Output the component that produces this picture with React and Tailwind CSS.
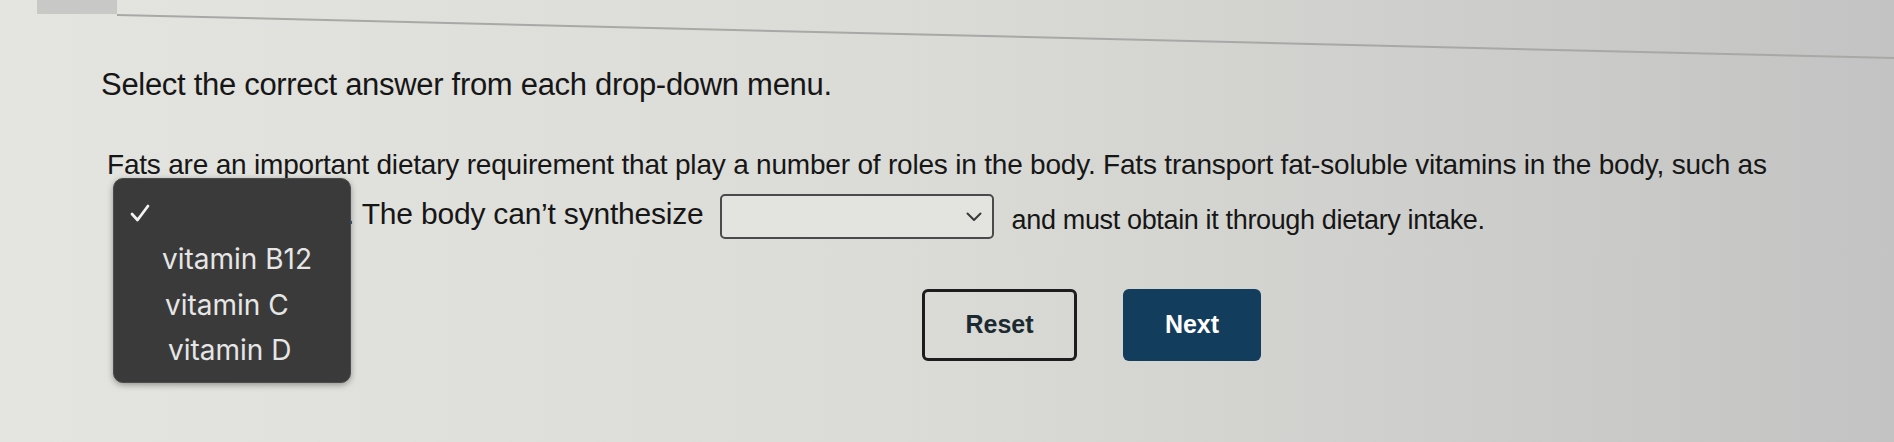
import React from "react";

function Check() {
  return (
    <svg width="20" height="18" viewBox="0 0 20 18" fill="none">
      <path d="M2 10 L7.5 16 L18 2" stroke="#f2f2f2" strokeWidth="2.8" strokeLinecap="round" strokeLinejoin="round" />
    </svg>
  );
}

function Chevron() {
  return (
    <svg width="16" height="10" viewBox="0 0 16 10" fill="none">
      <path d="M1.5 1.5 L8 8 L14.5 1.5" stroke="#3a3a3a" strokeWidth="2" strokeLinecap="round" strokeLinejoin="round" />
    </svg>
  );
}

export default function App() {
  const font = { fontFamily: '"Liberation Sans", Arial, sans-serif' };
  return (
    <div
      className="relative w-[1894px] h-[442px] overflow-hidden bg-gradient-to-r from-[#e4e4e0] via-[#dadad6] to-[#c3c3c3] text-[#161616]"
      style={font}
    >
      {/* top strip */}
      <div className="flex h-[14px]">
        <div className="ml-[37px] w-[80px] h-[14px] bg-[#c8c8c6]" />
      </div>
      <div className="ml-[117px] w-[1800px] h-[2px] bg-[#a8a8a6] origin-left rotate-[1.39deg]" />

      {/* instruction */}
      <div className="pl-[101px] mt-[51px] text-[31px] leading-[36px] tracking-[-0.3px]">
        Select the correct answer from each drop-down menu.
      </div>

      {/* paragraph */}
      <div className="pl-[107px] mt-[45px] text-[28px] leading-[34px] tracking-[-0.2px]">
        <div className="whitespace-nowrap">
          Fats are an important dietary requirement that play a number of roles in the body. Fats transport fat-soluble vitamins in the body, such as
        </div>
        <div className="flex items-center mt-[12px] whitespace-nowrap">
          <div className="ml-[6px] w-[232px] h-[44px] border-2 border-[#555] rounded-[5px] bg-[#e6e6e3]" />
          <span className="ml-[1px] -mt-[6px] text-[30px] tracking-[-0.2px]">. The body can’t synthesize</span>
          <div className="ml-[16px] w-[274px] h-[45px] border-2 border-[#4a4a4a] rounded-[5px] bg-[#e3e3df] flex items-center justify-end pr-[10px]">
            <Chevron />
          </div>
          <span className="ml-[18px] mt-[6px] text-[27px] tracking-[-0.35px]">and must obtain it through dietary intake.</span>
        </div>
      </div>

      {/* buttons */}
      <div className="flex mt-[50px] pl-[922px] gap-[46px]">
        <button
          className="w-[155px] h-[72px] rounded-[6px] border-[3px] border-[#1d1d1d] bg-transparent text-[25px] font-bold text-[#1b2a30]"
          style={font}
        >
          Reset
        </button>
        <button
          className="w-[138px] h-[72px] rounded-[6px] bg-[#133d5d] text-[25px] font-bold text-white"
          style={font}
        >
          Next
        </button>
      </div>

      {/* open dropdown menu overlay */}
      <div
        className="absolute left-[113px] top-[178px] w-[238px] h-[205px] rounded-[10px] bg-[#3a3a3a] border border-[#4c4c4c] shadow-[0_2px_6px_rgba(0,0,0,0.35)] pt-[11px] text-[#e6e6e6] text-[28px]"
        style={{ fontFamily: 'Inter, "Noto Sans", sans-serif' }}
      >
        <div className="h-[45px] flex items-center pl-[16px]">
          <Check />
        </div>
        <div className="h-[47px] flex items-center pl-[48px]">vitamin B12</div>
        <div className="h-[45px] flex items-center pl-[51px]">vitamin C</div>
        <div className="h-[45px] flex items-center pl-[54px]">vitamin D</div>
      </div>
    </div>
  );
}
